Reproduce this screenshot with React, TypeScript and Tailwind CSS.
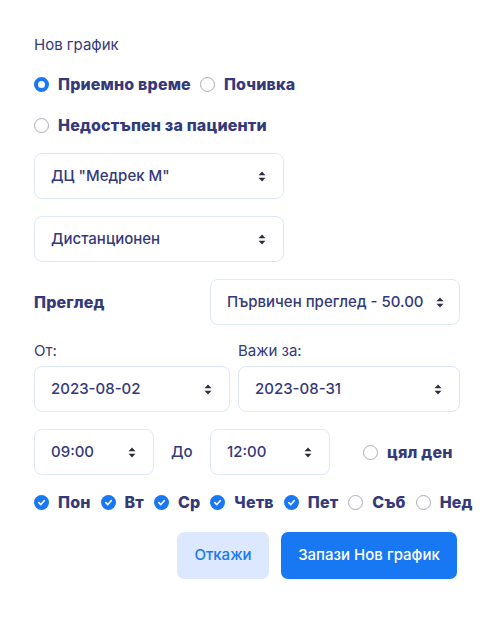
import React, { useState } from "react";

const Radio = ({ checked, label, onClick }: { checked?: boolean; label: string; onClick?: () => void }) => (
  <label className="flex items-center gap-[9px] cursor-pointer" onClick={onClick}>
    <span
      className={
        checked
          ? "w-[15px] h-[15px] rounded-full border-[4px] border-[#1877f2] bg-white"
          : "w-[15px] h-[15px] rounded-full border border-[#a9adb6] bg-white"
      }
    />
    <span className="text-[16px] font-extrabold tracking-[0.01em] text-[#34397a]">{label}</span>
  </label>
);

const Check = ({ checked, label }: { checked: boolean; label: string }) => (
  <label className="flex items-center gap-[9px]">
    {checked ? (
      <span className="w-[15px] h-[15px] rounded-full bg-[#1877f2] flex items-center justify-center">
        <svg width="9" height="9" viewBox="0 0 10 10" fill="none">
          <path d="M2 5.2 L4.2 7.3 L8 3" stroke="white" strokeWidth="1.8" strokeLinecap="round" strokeLinejoin="round" />
        </svg>
      </span>
    ) : (
      <span className="w-[15px] h-[15px] rounded-full border border-[#a9adb6] bg-white" />
    )}
    <span className="text-[16px] font-extrabold tracking-[0.01em] text-[#34397a]">{label}</span>
  </label>
);

const Arrows = () => (
  <svg width="8" height="11" viewBox="0 0 8 11" className="shrink-0">
    <path d="M4 0.5 L7.5 4.3 H0.5 Z" fill="#2a2d3f" />
    <path d="M4 10.5 L7.5 6.7 H0.5 Z" fill="#2a2d3f" />
  </svg>
);

const Select = ({ value, className = "" }: { value: string; className?: string }) => (
  <div
    className={
      "h-[46px] rounded-[8px] border border-[#dde8fb] bg-white flex items-center justify-between pl-[16px] pr-[17px] " +
      className
    }
  >
    <span className="text-[15px] font-medium text-[#34397a] whitespace-nowrap">{value}</span>
    <Arrows />
  </div>
);

export default function App() {
  const [type, setType] = useState("reception");
  const days = [
    { label: "Пон", on: true },
    { label: "Вт", on: true },
    { label: "Ср", on: true },
    { label: "Четв", on: true },
    { label: "Пет", on: true },
    { label: "Съб", on: false },
    { label: "Нед", on: false },
  ];

  return (
    <div
      className="min-h-screen bg-white pl-[34px] pr-[34px] pt-[36px]"
      style={{ fontFamily: "Inter, 'Noto Sans', sans-serif" }}
    >
      <div className="w-[426px] flex flex-col">
        <h2 className="text-[15px] text-[#34397a] leading-[18px]">Нов график</h2>

        <div className="flex items-center gap-[9px] mt-[20px] h-[20px]">
          <Radio checked={type === "reception"} label="Приемно време" onClick={() => setType("reception")} />
          <Radio checked={type === "break"} label="Почивка" onClick={() => setType("break")} />
        </div>
        <div className="flex items-center mt-[21px] h-[20px]">
          <Radio checked={type === "na"} label="Недостъпен за пациенти" onClick={() => setType("na")} />
        </div>

        <Select value='ДЦ "Медрек М"' className="w-[250px] mt-[18px]" />
        <Select value="Дистанционен" className="w-[250px] mt-[17px]" />

        <div className="flex items-center justify-between mt-[17px]">
          <span className="text-[16px] font-extrabold tracking-[0.01em] text-[#34397a]">Преглед</span>
          <Select value="Първичен преглед - 50.00" className="w-[250px] gap-[12px]" />
        </div>

        <div className="grid grid-cols-[196px_222px] gap-x-[8px] mt-[17px]">
          <span className="text-[15px] text-[#34397a] leading-[18px]">От:</span>
          <span className="text-[15px] text-[#34397a] leading-[18px]">Важи за:</span>
          <Select value="2023-08-02" className="mt-[6px]" />
          <Select value="2023-08-31" className="mt-[6px]" />
        </div>

        <div className="flex items-center mt-[17px]">
          <Select value="09:00" className="w-[120px]" />
          <span className="text-[15px] font-medium text-[#34397a] ml-[17px] w-[39px]">До</span>
          <Select value="12:00" className="w-[120px]" />
          <div className="ml-[33px]">
            <Radio label="цял ден" />
          </div>
        </div>

        <div className="flex items-center gap-[10px] mt-[15px]">
          {days.map((d) => (
            <Check key={d.label} checked={d.on} label={d.label} />
          ))}
        </div>

        <div className="flex justify-end gap-[12px] mt-[18px] pr-[3px]">
          <button className="h-[47px] w-[92px] rounded-[7px] bg-[#dbe8fd] text-[#1877f2] text-[15px] font-medium">
            Откажи
          </button>
          <button className="h-[47px] w-[176px] rounded-[7px] bg-[#1877f2] text-white text-[15px] font-medium">
            Запази Нов график
          </button>
        </div>
      </div>
    </div>
  );
}
